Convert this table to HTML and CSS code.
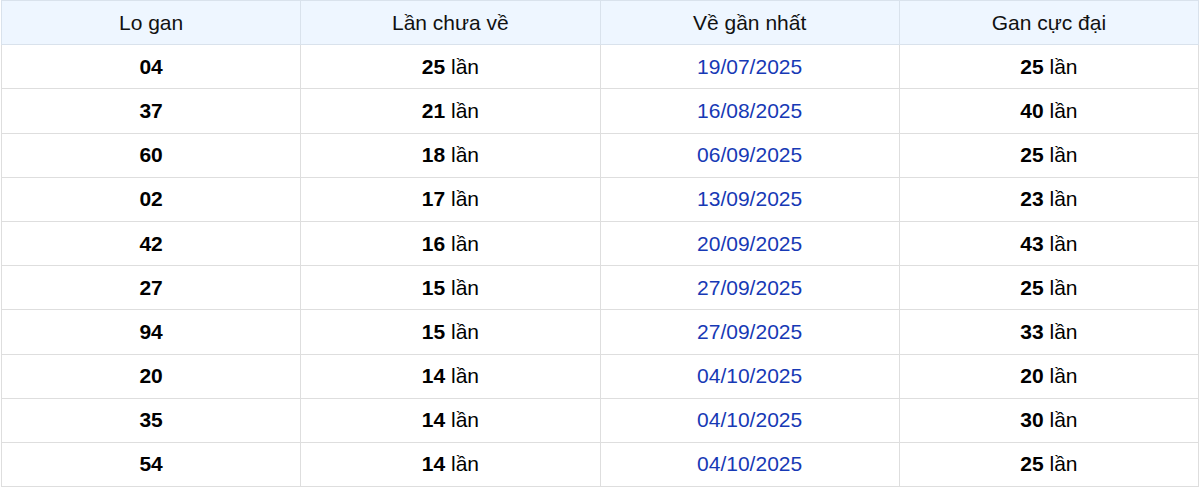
FILE: index.html
```html
<!DOCTYPE html>
<html lang="vi">
<head>
<meta charset="utf-8">
<link rel="stylesheet" href="styles.css">
</head>
<body>
<table class="gan-table">
  <thead>
    <tr><th>Lo gan</th><th>Lần chưa về</th><th>Về gần nhất</th><th>Gan cực đại</th></tr>
  </thead>
  <tbody>
    <tr><td class="num">04</td><td><b>25</b> lần</td><td class="date">19/07/2025</td><td><b>25</b> lần</td></tr>
    <tr><td class="num">37</td><td><b>21</b> lần</td><td class="date">16/08/2025</td><td><b>40</b> lần</td></tr>
    <tr><td class="num">60</td><td><b>18</b> lần</td><td class="date">06/09/2025</td><td><b>25</b> lần</td></tr>
    <tr><td class="num">02</td><td><b>17</b> lần</td><td class="date">13/09/2025</td><td><b>23</b> lần</td></tr>
    <tr><td class="num">42</td><td><b>16</b> lần</td><td class="date">20/09/2025</td><td><b>43</b> lần</td></tr>
    <tr><td class="num">27</td><td><b>15</b> lần</td><td class="date">27/09/2025</td><td><b>25</b> lần</td></tr>
    <tr><td class="num">94</td><td><b>15</b> lần</td><td class="date">27/09/2025</td><td><b>33</b> lần</td></tr>
    <tr><td class="num">20</td><td><b>14</b> lần</td><td class="date">04/10/2025</td><td><b>20</b> lần</td></tr>
    <tr><td class="num">35</td><td><b>14</b> lần</td><td class="date">04/10/2025</td><td><b>30</b> lần</td></tr>
    <tr><td class="num">54</td><td><b>14</b> lần</td><td class="date">04/10/2025</td><td><b>25</b> lần</td></tr>
  </tbody>
</table>
</body>
</html>
```
FILE: styles.css
```css
html, body {
  margin: 0;
  padding: 0;
  background: #ffffff;
}
body {
  padding: 0 1px;
  font-family: "Liberation Sans", Arial, sans-serif;
  color: #000000;
}
.gan-table {
  width: 100%;
  border-collapse: collapse;
  table-layout: fixed;
  font-size: 21px;
}
.gan-table th,
.gan-table td {
  border: 1px solid #dedede;
  text-align: center;
  vertical-align: middle;
  padding: 0;
  height: 43.2px;
}
.gan-table th {
  background: #eef6ff;
  font-weight: normal;
  color: #111111;
  border-color: #d9e2ec;
}
.gan-table td b,
.gan-table td.num {
  font-weight: bold;
}
.gan-table td.date {
  color: #1739b5;
}
```
